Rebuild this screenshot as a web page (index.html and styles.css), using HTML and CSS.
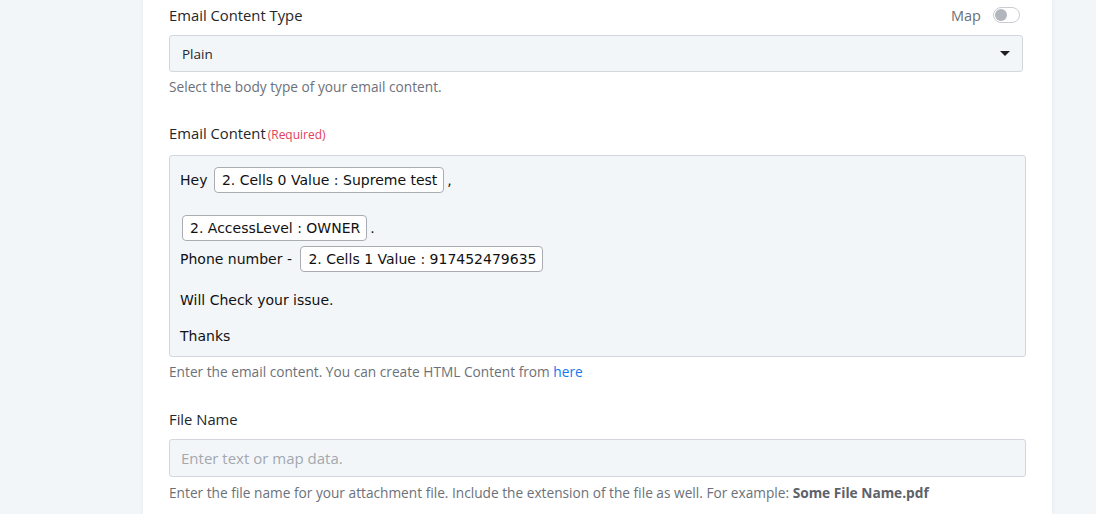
FILE: index.html
```html
<!DOCTYPE html>
<html lang="en">
<head>
<meta charset="utf-8">
<title>Email action settings</title>
<link rel="stylesheet" href="styles.css">
</head>
<body>
<div class="page">
  <main class="panel">
    <section class="field">
      <div class="field-head">
        <label class="label">Email Content Type</label>
        <div class="map">
          <span class="map-text">Map</span>
          <span class="toggle"><span class="knob"></span></span>
        </div>
      </div>
      <div class="select">
        <span class="select-value">Plain</span>
        <span class="caret"></span>
      </div>
      <p class="help">Select the body type of your email content.</p>
    </section>

    <section class="field">
      <div class="field-head">
        <label class="label">Email Content<span class="required">(Required)</span></label>
      </div>
      <div class="editor">
        <div class="line l1">Hey <span class="token">2. Cells 0 Value : Supreme test</span>,</div>
        <div class="line l2"><span class="token">2. AccessLevel : OWNER</span>.</div>
        <div class="line l3">Phone number - <span class="token">2. Cells 1 Value : 917452479635</span></div>
        <div class="line text l4">Will Check your issue.</div>
        <div class="line text l5">Thanks</div>
      </div>
      <p class="help">Enter the email content. You can create HTML Content from <a class="link" href="#">here</a></p>
    </section>

    <section class="field field-file">
      <div class="field-head">
        <label class="label">File Name</label>
      </div>
      <div class="input"><span class="placeholder">Enter text or map data.</span></div>
      <p class="help help-file">Enter the file name for your attachment file. Include the extension of the file as well. For example: <b class="strong">Some File Name.pdf</b></p>
    </section>
  </main>
</div>
</body>
</html>
```

FILE: styles.css
```css
* { box-sizing: border-box; }

html, body {
  margin: 0;
  height: 100%;
}

body {
  background: #f3f6f9;
  font-family: "Open Sans", "Liberation Sans", sans-serif;
  color: #26292e;
  overflow: hidden;
}

.page {
  display: flex;
  height: 100%;
  padding-left: 143px;
}

.panel {
  width: 909px;
  background: #ffffff;
  padding: 5px 26px 0 26px;
  box-shadow: 0 0 4px rgba(20, 40, 70, 0.08);
}

.field + .field { margin-top: 28px; }

.field-head {
  display: flex;
  align-items: center;
  justify-content: space-between;
  height: 20px;
  margin-bottom: 11px;
}

.field:first-child .field-head { margin-bottom: 10px; }
.field-file .field-head { margin-bottom: 10px; }

.label {
  font-size: 14.8px;
  line-height: 20px;
  color: #24272b;
}

.required {
  font-size: 12px;
  color: #e4405c;
  margin-left: 2px;
}

.map {
  display: flex;
  align-items: center;
  gap: 12px;
  margin-right: 6px;
}

.map-text {
  font-size: 14.5px;
  color: #6b7079;
}

.toggle {
  width: 27px;
  height: 16px;
  border: 1px solid #c9cdd3;
  border-radius: 8px;
  background: #fff;
  display: flex;
  align-items: center;
  padding-left: 1px;
}

.knob {
  width: 12px;
  height: 12px;
  border-radius: 50%;
  background: #b3b7bd;
}

.select {
  height: 37px;
  margin-right: 3px;
  border: 1px solid #d3d7dd;
  border-radius: 3px;
  background: #f3f6f9;
  display: flex;
  align-items: center;
  justify-content: space-between;
  padding: 0 12px 0 12px;
}

.select-value {
  font-size: 13.5px;
  color: #24272b;
}

.caret {
  width: 0;
  height: 0;
  border-left: 5px solid transparent;
  border-right: 5px solid transparent;
  border-top: 5px solid #1d1f22;
}

.help {
  margin: 6px 0 0;
  font-size: 13.7px;
  line-height: 18px;
  color: #6c7179;
}

.help-file { margin-top: 7px; }

.link {
  color: #1479ee;
  text-decoration: none;
}

.strong {
  font-weight: 700;
  color: #5d626a;
}

.editor {
  border: 1px solid #d3d7dd;
  border-radius: 3px;
  background: #f3f6f9;
  padding: 11px 10px 10px 10px;
  font-family: "DejaVu Sans", Verdana, sans-serif;
  font-size: 14px;
  color: #111;
}

.line {
  display: flex;
  align-items: center;
  height: 26px;
  white-space: pre;
}

.line.text { height: 20px; }

.l2 { margin-top: 22px; }
.l3 { margin-top: 5px; }
.l4 { margin-top: 18px; }
.l5 { margin-top: 16px; }

.l2 .token { margin-left: 2px; }

.token {
  display: inline-flex;
  align-items: center;
  height: 26px;
  padding: 0 6px 0 7px;
  background: #fff;
  border: 1px solid #a9adb3;
  border-radius: 4px;
  margin: 0 3px 0 2px;
}

.l3 .token { margin-left: 4px; }

.input {
  height: 38px;
  border: 1px solid #d3d7dd;
  border-radius: 3px;
  background: #f3f6f9;
  display: flex;
  align-items: center;
  padding: 0 11px;
}

.placeholder {
  font-size: 15px;
  color: #a3a8ae;
}
```
